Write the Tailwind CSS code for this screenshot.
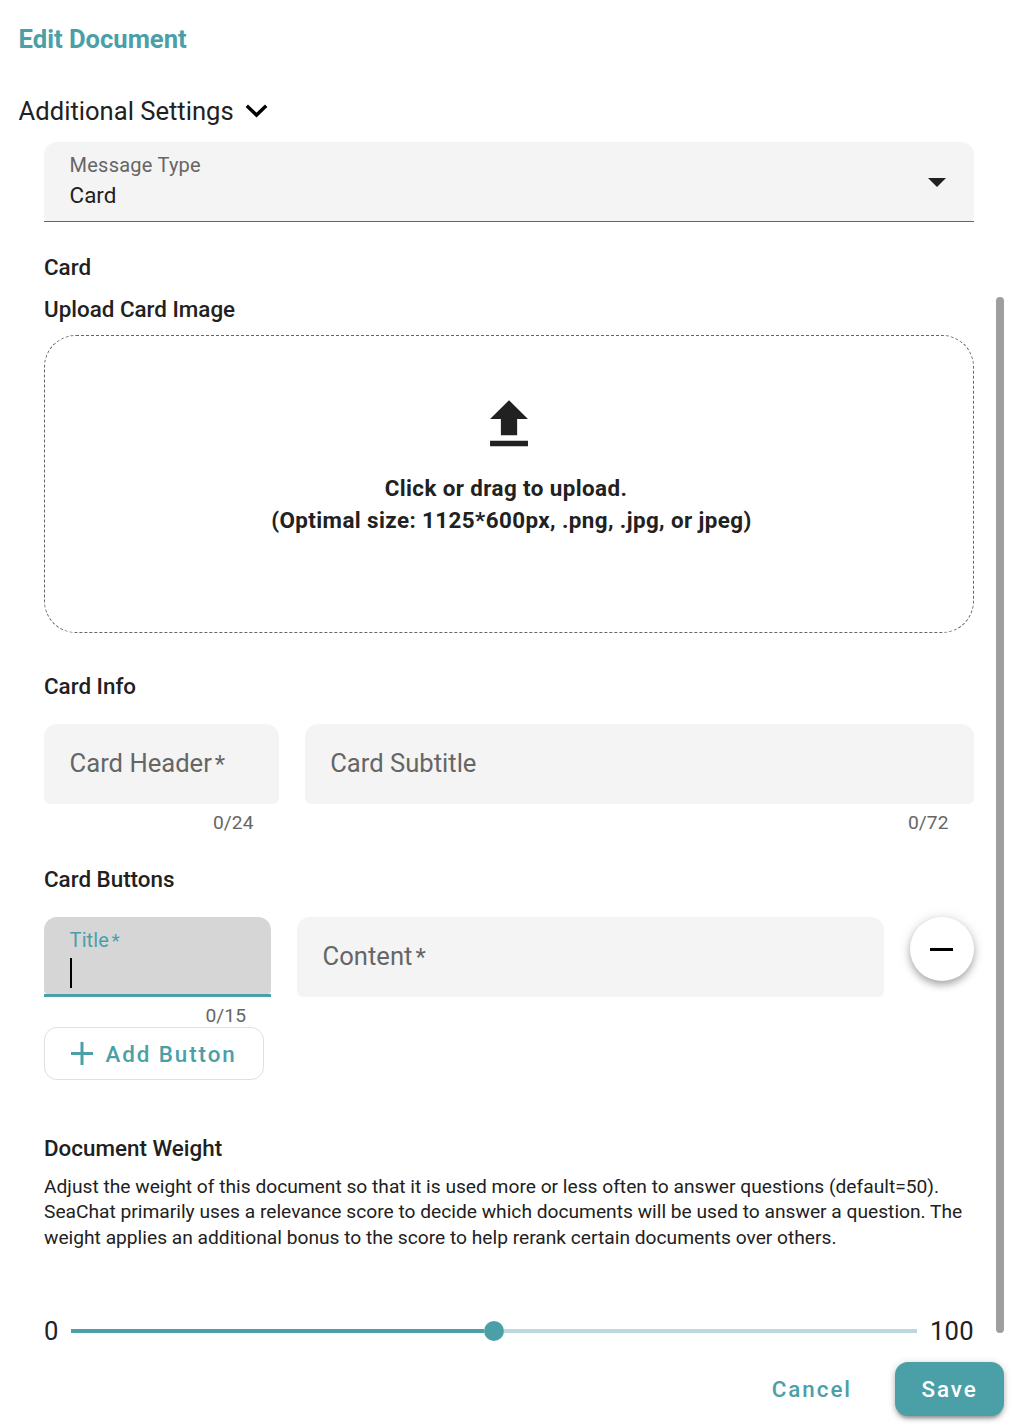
<!DOCTYPE html>
<html lang="en">
<head>
<meta charset="utf-8">
<title>Edit Document</title>
<script src="https://cdn.jsdelivr.net/npm/@tailwindcss/browser@4"></script>
</head>
<body class="bg-white">
<div class="flex h-[1426px] w-[1014px] flex-col overflow-hidden font-['Roboto',sans-serif] text-[#212121]">
  <h1 class="pl-[18.6px] pt-5 text-[25.6px]/[39px] font-bold text-[#4b9fa7]">Edit Document</h1>
  <button class="mt-[33px] flex h-[38px] items-center pl-[18.6px] text-[25.6px]/[38px]">
    <span>Additional Settings</span>
    <svg class="ml-[11px] h-[14px] w-[23px]" viewBox="0 0 23 14" fill="none" stroke="#000" stroke-width="3.4"><path d="M1.8 1.8l9.7 9.3 9.7-9.3"/></svg>
  </button>

  <div class="flex">
    <main class="ml-11 w-[930px] pt-3">
      <div class="flex h-20 items-start justify-between rounded-t-[13px] rounded-b-[6px] bg-[#f4f4f4] pl-[25.6px] pr-[27px] pt-2">
        <div>
          <div class="text-[20px]/[30px] tracking-[0.23px] text-[#666]">Message Type</div>
          <div class="text-[22.4px]/[30px]">Card</div>
        </div>
        <svg class="mt-[27px] h-[10px] w-5" viewBox="0 0 20 10" fill="#212121"><path d="M1 1h18L10 10z"/></svg>
      </div>
      <div class="-mt-px h-px bg-[#666]"></div>

      <h2 class="mt-[29px] text-[22.4px]/[32px] font-medium">Card</h2>
      <h3 class="mt-[10px] text-[22.4px]/[32px] font-medium">Upload Card Image</h3>
      <div class="mt-[10px] flex h-[298px] flex-col items-center rounded-[32px] border border-dashed border-[#666] pt-14 text-[22.4px]/[32px] font-bold tracking-[0.4px]">
        <svg class="h-[65px] w-[65px]" viewBox="0.18 0 24 24" fill="#212121"><path d="M5 20h14v-2H5v2zm0-10h4v6h6v-6h4l-7-7-7 7z"/></svg>
        <p class="mt-[15px]">Click or drag to upload.&nbsp;</p>
        <p class="pl-[5px]">(Optimal size: 1125*600px, .png, .jpg, or jpeg)</p>
      </div>

      <h3 class="mt-[37px] text-[22.4px]/[32px] font-medium">Card Info</h3>
      <div class="mt-[22px] flex gap-[26px]">
        <div class="w-[235px]">
          <div class="h-20 rounded-t-[13px] rounded-b-[6px] bg-[#f4f4f4] px-[25.6px] text-[25.6px]/[79px] text-[#666]">Card Header<span class="ml-[3px] text-[24px]">*</span></div>
          <div class="pr-[25.5px] text-right text-[19.2px]/[38px] tracking-[0.05px] text-[#666]">0/24</div>
        </div>
        <div class="flex-1">
          <div class="h-20 rounded-t-[13px] rounded-b-[6px] bg-[#f4f4f4] px-[25.2px] text-[25.6px]/[79px] text-[#666]">Card Subtitle</div>
          <div class="pr-[25.5px] text-right text-[19.2px]/[38px] tracking-[0.05px] text-[#666]">0/72</div>
        </div>
      </div>

      <h3 class="mt-[21px] text-[22.4px]/[32px] font-medium">Card Buttons</h3>
      <div class="mt-[22px] flex h-[110px] gap-[26px]">
        <div class="w-[227px]">
          <div class="h-[77px] rounded-t-[13px] rounded-b-[4px] bg-[#d6d6d6] pl-[26px] pt-2">
            <div class="-ml-[0.4px] h-[30px] text-[20px]/[30px] tracking-[0.1px] text-[#4b9fa7]">Title<span class="ml-[2.5px] text-[19px]">*</span></div>
            <div class="mt-[3px] h-[30px] w-[2px] bg-black"></div>
          </div>
          <div class="h-[3px] bg-[#4b9fa7]"></div>
          <div class="pr-[25px] text-right text-[19.2px]/[38px] tracking-[0.05px] text-[#666]">0/15</div>
        </div>
        <div class="h-20 w-[587px] rounded-t-[13px] rounded-b-[6px] bg-[#f4f4f4] px-[25.6px] text-[25.6px]/[79px] text-[#666]">Content<span class="ml-[3px] text-[24px]">*</span></div>
        <button class="flex size-16 items-center justify-center rounded-full bg-white shadow-[0_5px_8px_-2px_rgba(0,0,0,0.22),0_3px_8px_rgba(0,0,0,0.14),0_1px_14px_rgba(0,0,0,0.12)]"><span class="mr-[1px] h-[3px] w-[23px] bg-black"></span></button>
      </div>
      <button class="flex h-[53px] w-[220px] items-center rounded-[13px] border border-[#e0e0e0] pl-[26px] text-[22.4px] font-medium tracking-[1.9px] text-[#4b9fa7]">
        <svg class="mr-[12.6px] h-[23px] w-[22px]" viewBox="0 0 22 23" fill="none" stroke="#4b9fa7" stroke-width="3"><path d="M0 11.5h22M11 0v23"/></svg>
        <span class="pt-[2px]">Add Button</span>
      </button>

      <h3 class="mt-[52px] text-[22.4px]/[32px] font-medium">Document Weight</h3>
      <p class="mt-[9.6px] text-[19.2px]/[25.6px]">Adjust the weight of this document so that it is used more or less often to answer questions (default=50).<br>SeaChat primarily uses a relevance score to decide which documents will be used to answer a question. The<br>weight applies an additional bonus to the score to help rerank certain documents over others.</p>
      <div class="mt-[61.6px] flex h-[38px] items-center text-[25.6px]/[38px] tracking-[0.24px]">
        <span class="w-[27px]">0</span>
        <div class="flex w-[846px] items-center">
          <span class="h-1 w-[413px] bg-[#4b9fa7]"></span>
          <span class="size-5 rounded-full bg-[#4b9fa7]"></span>
          <span class="h-1 flex-1 bg-[#b9d9dc]"></span>
        </div>
        <span class="ml-[13px]">100</span>
      </div>
    </main>
    <div class="ml-[22px] mt-[167px] h-[1036px] w-2 rounded-full bg-[#9e9e9e]"></div>
  </div>

  <footer class="mt-[12px] flex h-[54px] shrink-0 items-center justify-end pr-[10px] text-[22.4px] font-medium tracking-[1.95px]">
    <button class="mr-[43px] pt-[2px] text-[#4b9fa7]">Cancel</button>
    <button class="h-[54px] w-[109px] rounded-[13px] bg-[#4b9fa7] pt-[2px] text-white shadow-[0_4px_3px_-2px_rgba(0,0,0,0.2),0_3px_5px_rgba(0,0,0,0.2),0_1px_8px_rgba(0,0,0,0.14)]">Save</button>
  </footer>
</div>
</body>
</html>
